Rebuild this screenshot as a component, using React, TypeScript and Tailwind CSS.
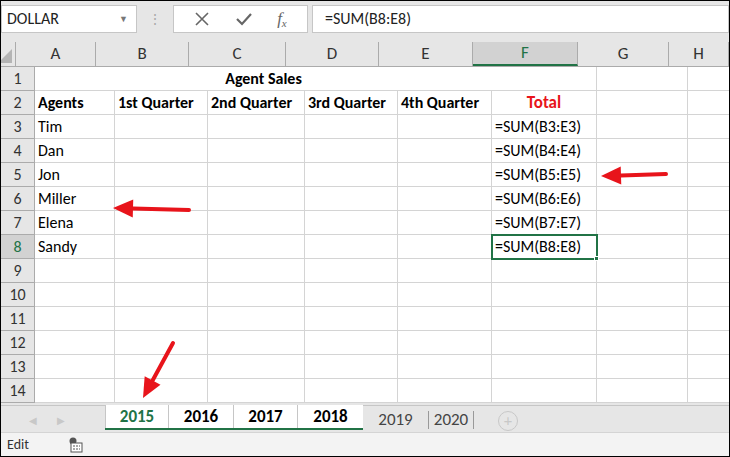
import React from 'react'

const cols = [
  { k: 'A', w: 80 },
  { k: 'B', w: 93 },
  { k: 'C', w: 97 },
  { k: 'D', w: 93 },
  { k: 'E', w: 94 },
  { k: 'F', w: 105 },
  { k: 'G', w: 91 },
  { k: 'H', w: 60 },
]

const rows: Record<number, (string | null)[]> = {
  2: ['Agents', '1st Quarter', '2nd Quarter', '3rd Quarter', '4th Quarter', 'Total'],
  3: ['Tim', '', '', '', '', '=SUM(B3:E3)'],
  4: ['Dan', '', '', '', '', '=SUM(B4:E4)'],
  5: ['Jon', '', '', '', '', '=SUM(B5:E5)'],
  6: ['Miller', '', '', '', '', '=SUM(B6:E6)'],
  7: ['Elena', '', '', '', '', '=SUM(B7:E7)'],
  8: ['Sandy', '', '', '', '', '=SUM(B8:E8)'],
}

function Arrow({ x1, y1, x2, y2 }: { x1: number; y1: number; x2: number; y2: number }) {
  const a = Math.atan2(y2 - y1, x2 - x1)
  const L = 20, W = 9
  const bx = x2 - L * Math.cos(a), by = y2 - L * Math.sin(a)
  const px = -Math.sin(a) * W, py = Math.cos(a) * W
  return (
    <g>
      <line x1={x1} y1={y1} x2={bx} y2={by} stroke="#e8141b" strokeWidth={4} strokeLinecap="round" />
      <polygon points={`${x2},${y2} ${bx + px},${by + py} ${bx - px},${by - py}`} fill="#e8141b" />
    </g>
  )
}

export default function App() {
  const font = { fontFamily: 'Calibri, Carlito, "Liberation Sans", Arial, sans-serif' }
  return (
    <div className="relative w-[730px] h-[457px] overflow-hidden bg-[#e6e6e6] border border-black text-black" style={font}>
      {/* formula bar */}
      <div className="flex h-[34px] items-center pt-[2px]">
        <div className="flex h-[28px] w-[136px] items-center justify-between border border-[#c6c6c6] bg-white pl-[5px] pr-[8px] text-[16px] text-[#222]">
          DOLLAR<span className="text-[9px] text-[#777]">▼</span>
        </div>
        <div className="flex w-[36px] justify-center text-[#aaa] text-[14px]">⋮</div>
        <div className="flex h-[28px] w-[135px] items-center justify-around border border-[#c6c6c6] bg-white px-2 text-[#666]">
          <svg width="16" height="16" viewBox="0 0 16 16"><path d="M2 2L14 14M14 2L2 14" stroke="#666" strokeWidth="1.6" /></svg>
          <svg width="18" height="16" viewBox="0 0 18 16"><path d="M2 8L7 13L16 3" stroke="#666" strokeWidth="2.2" fill="none" /></svg>
          <span className="italic text-[17px]" style={{ fontFamily: '"Liberation Serif", serif' }}>f<sub className="text-[11px]">x</sub></span>
        </div>
        <div className="ml-[4px] flex h-[28px] flex-1 items-center border border-[#c6c6c6] bg-white pl-[12px] text-[16px] text-[#222]">=SUM(B8:E8)</div>
      </div>
      {/* grid */}
      <div className="mt-[7px] bg-white">
        <div className="flex h-[25px] bg-[#e6e6e6] border-b border-[#ababab] text-[17px] text-[#333]">
          <div className="relative w-[34px] border-r border-[#ababab]">
            <div className="absolute right-[3px] bottom-[3px] h-0 w-0 border-b-[14px] border-l-[14px] border-b-[#b4b4b4] border-l-transparent" />
          </div>
          {cols.map(c => (
            <div key={c.k} style={{ width: c.w }} className={`flex shrink-0 items-center justify-center border-r border-[#ababab] ${c.k === 'F' ? 'bg-[#d2d2d2] text-[#217346] border-b-2 border-b-[#217346]' : ''}`}>{c.k}</div>
          ))}
        </div>
        {Array.from({ length: 14 }, (_, i) => i + 1).map(r => (
          <div key={r} className="flex h-[24px] text-[16px]">
            <div className={`flex w-[34px] shrink-0 items-center justify-center border-r border-b border-[#ababab] text-[#333] ${r === 8 ? 'bg-[#d2d2d2] text-[#217346]' : 'bg-[#e6e6e6]'}`}>{r}</div>
            {r === 1 ? (
              <>
                <div className="flex shrink-0 items-center justify-center border-b border-[#d4d4d4] font-bold" style={{ width: 457 }}>Agent Sales</div>
                {cols.slice(5).map(c => <div key={c.k} style={{ width: c.w }} className="shrink-0 border-r border-b border-[#d4d4d4] first:border-l" />)}
              </>
            ) : (
              cols.map((c, ci) => {
                const v = rows[r]?.[ci] ?? ''
                const total = r === 2 && c.k === 'F'
                const sel = r === 8 && c.k === 'F'
                return (
                  <div key={c.k} style={{ width: c.w }} className={`relative flex shrink-0 items-center overflow-visible whitespace-nowrap border-r border-b border-[#d4d4d4] px-[3px] ${r === 2 ? 'font-bold' : ''} ${total ? 'justify-center text-[#e8141b] text-[17px]' : ''} ${sel ? 'outline-2 outline-[#217346] -outline-offset-1 z-10' : ''}`}>
                    {v}
                    {sel && <div className="absolute -right-[3px] -bottom-[3px] h-[5px] w-[5px] bg-[#217346] border border-white" />}
                  </div>
                )
              })
            )}
          </div>
        ))}
      </div>
      {/* tabs */}
      <div className="mt-[2px] flex h-[27px] items-start bg-[#e6e6e6] border-t border-[#c6c6c6]">
        <div className="flex w-[104px] gap-[20px] pl-[28px] pt-[7px] text-[10px] text-[#c8c8c8]"><span>◀</span><span>▶</span></div>
        <div className="flex h-[25px] -mt-px items-stretch bg-white border-b-2 border-[#217346] text-[17px] font-bold">
          <div className="flex w-[64px] items-center justify-center border-l border-r border-[#c6c6c6] text-[#217346]">2015</div>
          <div className="flex w-[65px] items-center justify-center border-r border-[#c6c6c6]">2016</div>
          <div className="flex w-[64px] items-center justify-center border-r border-[#c6c6c6]">2017</div>
          <div className="flex w-[65px] items-center justify-center">2018</div>
        </div>
        <div className="flex h-[24px] items-center text-[17px] text-[#444]">
          <div className="mt-[4px] flex h-[18px] w-[66px] items-center justify-center border-r border-[#999]">2019</div>
          <div className="mt-[4px] flex h-[18px] w-[45px] items-center justify-center border-r border-[#999]">2020</div>
          <div className="ml-[24px] mt-[5px] flex h-[20px] w-[20px] items-center justify-center rounded-full border border-[#c8c8c8] text-[16px] text-[#c8c8c8]">+</div>
        </div>
      </div>
      {/* status */}
      <div className="flex h-[24px] items-center gap-[40px] bg-[#f3f3f3] pl-[6px] text-[14px] text-[#333] border-t border-[#d4d4d4]">
        <span>Edit</span>
        <svg width="14" height="16" viewBox="0 0 14 16"><circle cx="4" cy="4" r="3.5" fill="#555" /><rect x="2" y="6" width="11" height="9" fill="#fff" stroke="#555" /><path d="M4 9h2M7 9h2M10 9h1M4 12h2M7 12h2M10 12h1" stroke="#555" /></svg>
      </div>
      {/* arrows */}
      <svg className="pointer-events-none absolute left-0 top-0" width="730" height="457">
        <Arrow x1={188} y1={209} x2={112} y2={207} />
        <Arrow x1={665} y1={173} x2={600} y2={175} />
        <Arrow x1={172} y1={342} x2={142} y2={397} />
      </svg>
    </div>
  )
}
